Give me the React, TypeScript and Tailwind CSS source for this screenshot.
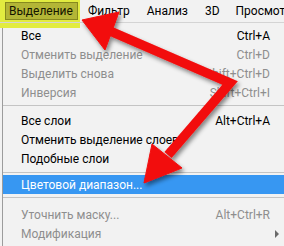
import React from 'react'

type Item =
  | { kind: 'item'; label: string; shortcut?: string; disabled?: boolean; active?: boolean; submenu?: boolean }
  | { kind: 'sep'; h: string; top: string }

const items: Item[] = [
  { kind: 'item', label: 'Все', shortcut: 'Ctrl+A' },
  { kind: 'item', label: 'Отменить выделение', shortcut: 'Ctrl+D', disabled: true },
  { kind: 'item', label: 'Выделить снова', shortcut: 'Shift+Ctrl+D', disabled: true },
  { kind: 'item', label: 'Инверсия', shortcut: 'Shift+Ctrl+I', disabled: true },
  { kind: 'sep', h: 'h-[9px]', top: 'pt-[3px]' },
  { kind: 'item', label: 'Все слои', shortcut: 'Alt+Ctrl+A' },
  { kind: 'item', label: 'Отменить выделение слоев' },
  { kind: 'item', label: 'Подобные слои' },
  { kind: 'sep', h: 'h-[7px]', top: 'pt-[4px]' },
  { kind: 'item', label: 'Цветовой диапазон...', active: true },
  { kind: 'sep', h: 'h-[11px]', top: 'pt-[3px]' },
  { kind: 'item', label: 'Уточнить маску...', shortcut: 'Alt+Ctrl+R', disabled: true },
  { kind: 'item', label: 'Модификация', disabled: true, submenu: true },
]

const menus = [
  { label: 'Фильтр', ml: 'ml-[10px]' },
  { label: 'Анализ', ml: 'ml-[17px]' },
  { label: '3D', ml: 'ml-[17px]' },
  { label: 'Просмотр', ml: 'ml-[16px]' },
]

const Arrows = () => (
  <svg className="absolute inset-0 pointer-events-none" width="284" height="246" viewBox="0 0 284 246">
    <defs>
      <filter id="shadow" x="-20%" y="-20%" width="140%" height="140%">
        <feDropShadow dx="2" dy="3" stdDeviation="2" floodColor="#000" floodOpacity="0.45" />
      </filter>
    </defs>
    <g filter="url(#shadow)" fill="#f20a0a" stroke="#f20a0a">
      {/* shaft with bend */}
      <polyline points="110,31 230,83 168,155" fill="none" strokeWidth="9.5" strokeLinejoin="miter" />
      {/* head 1 */}
      <polygon points="82,20 119,12 105,50" strokeWidth="1" strokeLinejoin="round" />
      {/* head 2 */}
      <polygon points="144,183 182,168 152,144" strokeWidth="1" strokeLinejoin="round" />
    </g>
  </svg>
)

export default function App() {
  return (
    <div className="relative w-[284px] h-[246px] overflow-hidden bg-[#f2f2f2] text-[12px] text-black" style={{ fontFamily: 'Roboto, "Noto Sans", sans-serif' }}>
      {/* marker highlight */}
      <div className="absolute left-0 top-0 w-[80px] h-[28px] bg-[#e2ec40]" />

      {/* menu bar */}
      <div className="relative flex items-center h-[23px] border-b border-[#d4d4d4] whitespace-nowrap">
        <div className="relative z-10 ml-[5px] h-[18px] pl-[3px] pr-[4px] flex items-center border border-[#878a1e] bg-[#b3b636] text-[#141400]">
          Выделение
        </div>
        {menus.map((m) => (
          <span key={m.label} className={m.ml}>
            {m.label}
          </span>
        ))}
      </div>

      {/* dropdown */}
      <div className="ml-[2px] border-l border-[#9c9c9c] pt-[3px] h-[223px]">
        {items.map((it, i) =>
          it.kind === 'sep' ? (
            <div key={i} className={`${it.h} ${it.top}`}>
              <div className="h-px bg-[#c4c4c4]" />
            </div>
          ) : (
            <div
              key={i}
              className={`relative flex items-center h-[19px] pl-[18px] pr-[14px] whitespace-nowrap ${
                it.active ? 'bg-[#3797f2] text-white' : it.disabled ? 'text-[#8e8e8e]' : 'text-black'
              }`}
            >
              <span className="flex-1">{it.label}</span>
              {it.shortcut && <span>{it.shortcut}</span>}
              {it.submenu && (
                <svg width="4" height="8" viewBox="0 0 4 8" className="absolute right-[5px]">
                  <path d="M0 0 L4 4 L0 8 Z" fill="#6a6a6a" />
                </svg>
              )}
            </div>
          )
        )}
      </div>

      <Arrows />
    </div>
  )
}
